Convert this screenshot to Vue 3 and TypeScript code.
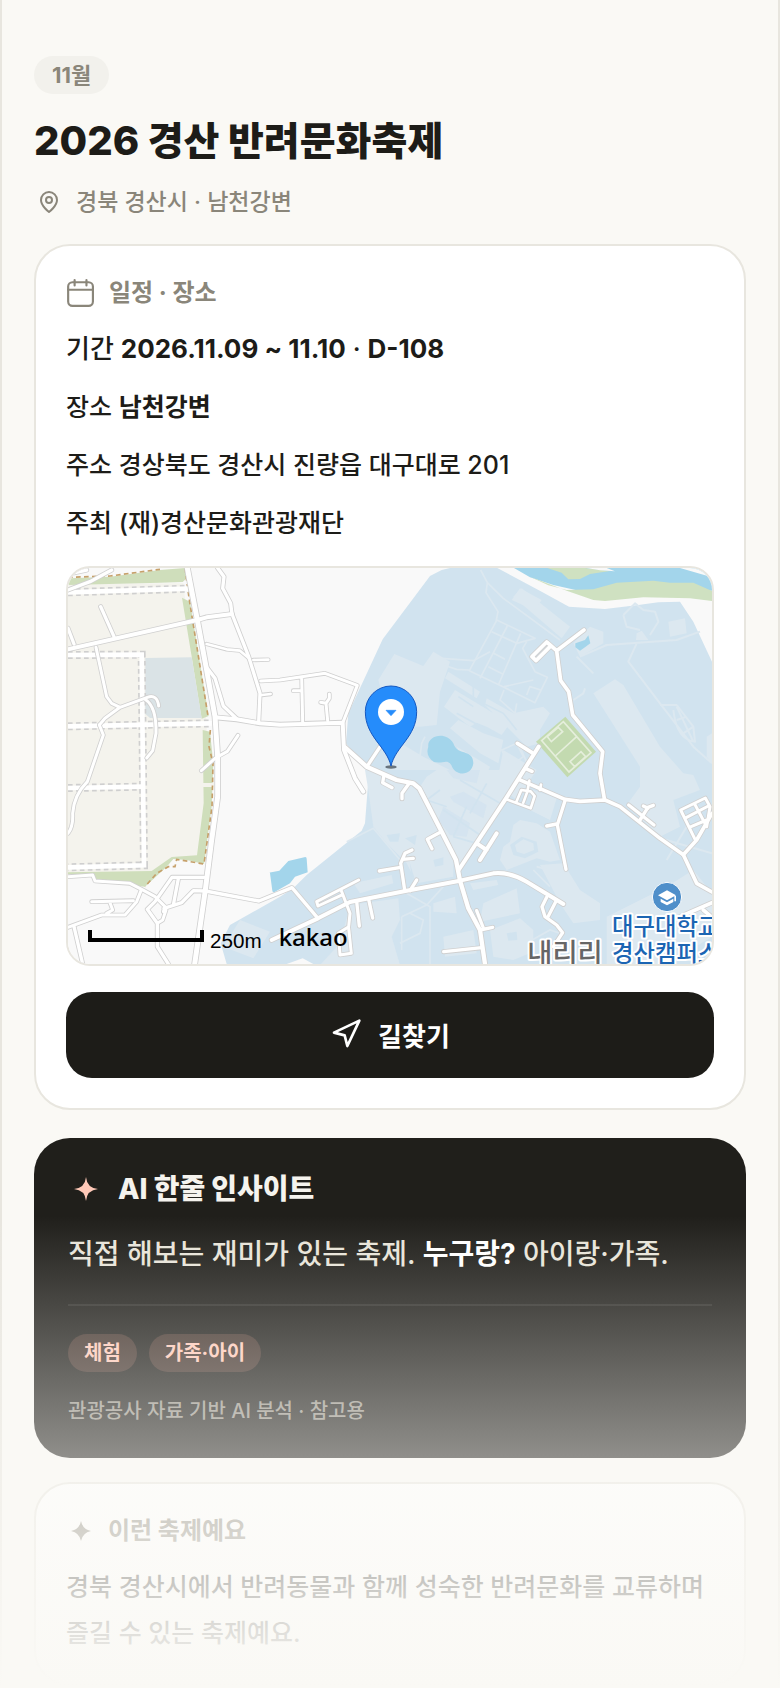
<script setup lang="ts">
interface Row {
  label: string
  value: string
  strong?: boolean
  extra?: string
}

interface Road {
  d: string
  w: number
}

const rows: Row[] = [
  { label: '기간', value: '2026.11.09 ~ 11.10', strong: true, extra: 'D-108' },
  { label: '장소', value: '남천강변', strong: true },
  { label: '주소', value: '경상북도 경산시 진량읍 대구대로 201' },
  { label: '주최', value: '(재)경산문화관광재단' },
]

const tags: string[] = ['체험', '가족·아이']

const roads: Road[] = [
  { d: 'M24 268 L412 180 L440 172 L516 162', w: 12 },
  { d: 'M382 24 L412 180 L438 320 L465 470 L473 590 L473 710 L455 840 L436 990 L404 1212', w: 15 },
  { d: 'M473 24 L492 50 L488 85 L512 130 L516 162 L566 290 L600 400 L596 486', w: 10 },
  { d: 'M465 472 L530 478 L600 490 L660 494 L848 488 L850 530 L852 570 L885 655 L910 695', w: 12 },
  { d: 'M440 252 L500 268 L540 272 L566 294 M580 300 L625 299 M606 405 L632 402', w: 8 },
  { d: 'M440 322 L465 355 L490 438 L530 476', w: 10 },
  { d: 'M602 363 L660 360 L795 340 L892 376 L850 484 M725 352 L728 486 M725 392 L700 392', w: 9 },
  { d: 'M803 482 L798 430 L782 427 M798 430 L808 415 L808 402', w: 9 },
  { d: 'M424 632 L465 595 L502 574 L534 526', w: 9 },
  { d: 'M122 140 L162 230 M24 205 L42 252 M24 90 L90 65 L155 30 M24 42 L80 30', w: 10 },
  { d: 'M108 262 L140 410 L155 430 L180 442 M118 495 L135 475 L180 442 L262 412 Q292 402 296 438', w: 9 },
  { d: 'M118 495 L130 525 L82 665 Q42 705 38 760 Q40 800 24 820', w: 9 },
  { d: 'M255 418 Q290 440 288 520 L278 572 L260 594', w: 9 },
  { d: 'M24 950 L98 945 L105 963 L210 970 L245 988 L285 1010 L315 1040 L310 1055', w: 9 },
  { d: 'M24 1102 L125 1065 L195 1065 L230 1025 L243 992 M95 1025 L220 1022 M150 1028 L158 1050 L140 1060', w: 9 },
  { d: 'M42 1100 L68 1212 M292 1090 L292 1160 L325 1212 M292 1090 L262 1048 L285 1025 L336 952 L432 952', w: 10 },
  { d: 'M355 956 L340 1035 M312 1045 L365 1028 L400 992 L436 993 L597 1023 L696 983 L774 1075', w: 10 },
  { d: 'M292 1090 L308 1080 L318 1050', w: 9 },
  { d: 'M635 1140 L774 1075 L870 1026 L1040 992 L1200 962 L1300 940 Q1350 935 1400 965 L1510 1032', w: 12 },
  { d: 'M855 562 L920 620 L1010 660 L1060 670 L1078 685 L1145 815 L1188 900 L1200 962 L1225 1045 L1260 1110 L1275 1212', w: 13 },
  { d: 'M922 618 L965 553 M972 645 L968 668 L996 683 M1046 672 L1026 700 L1026 716 M1142 816 L1102 838 L1116 866', w: 10 },
  { d: 'M1196 930 L1338 715 L1436 560 M1250 850 L1280 870 M1260 900 L1310 820', w: 12 },
  { d: 'M1372 550 L1416 578 M1396 625 L1416 634 M1376 658 L1515 718 L1560 724 L1635 720 L1680 740 L1800 835 L1870 884 L1910 840 L1956 760', w: 11 },
  { d: 'M1340 718 L1412 745 L1424 708 L1412 694 L1384 690 L1368 728 M1408 662 L1402 695 L1390 728 M1440 690 L1443 674', w: 8 },
  { d: 'M1515 722 L1492 795 L1518 928 M1460 798 L1490 792', w: 10 },
  { d: 'M1572 210 L1490 272 L1460 246 L1416 290 L1428 302 L1470 260 M1490 272 L1502 362 L1526 395 L1538 465 L1628 575 L1620 640 L1633 716', w: 11 },
  { d: 'M1706 735 L1782 795 M1740 780 L1764 742 L1780 736 M1750 738 L1764 745', w: 10 },
  { d: 'M1904 836 L1862 750 L1936 714 L1950 740 L1940 800 M1874 775 L1945 738 M1888 802 L1940 780 M1904 732 L1940 800', w: 9 },
  { d: 'M1870 884 L1910 970 L1956 996 M1860 1070 L1956 1028 M1930 1050 L1956 1072', w: 11 },
  { d: 'M1460 1012 L1446 1040 L1455 1070 L1490 1095 L1508 1118 L1480 1160 M1488 1024 L1464 1070', w: 10 },
  { d: 'M1151 1175 L1265 1163 M1260 1110 L1298 1102 M1250 1052 L1270 1104', w: 10 },
  { d: 'M896 960 L770 1025 L774 1038 L848 1004 M844 992 L870 1060 L866 1100 L835 1120 L840 1185 L874 1180 L866 1104', w: 9 },
  { d: 'M890 1024 L898 1098 M926 1018 L938 1074 M1034 990 L1022 910 L1035 880 L1056 870 M958 933 L1022 922 M1028 898 L1060 895 M1050 992 L1070 960', w: 10 },
]

const plannedRoads: string[] = [
  'M24 97 L385 86',
  'M24 285 L245 284 L252 916 L24 922',
  'M24 499 L455 490',
  'M24 684 L248 680',
]
</script>

<template>
  <main class="page">
    <header class="head">
      <span class="chip month">11월</span>
      <h1 class="title"><span class="year">2026</span> 경산 반려문화축제</h1>
      <p class="region">
        <svg class="pin-icon" viewBox="0 0 24 24" aria-hidden="true">
          <path d="M20 10c0 6-8 12-8 12s-8-6-8-12a8 8 0 0 1 16 0Z" />
          <circle cx="12" cy="10" r="3" />
        </svg>
        <span>경북 경산시 · 남천강변</span>
      </p>
    </header>

    <section class="card place">
      <h2 class="card-title">
        <svg class="cal-icon" viewBox="0 0 26 26" aria-hidden="true">
          <rect x="2" y="3" width="23" height="22" rx="4" />
          <path d="M2 10h23M8 1v5M19 1v5" />
        </svg>
        <span>일정 · 장소</span>
      </h2>
      <ul class="rows">
        <li v-for="row in rows" :key="row.label" :class="{ date: row.extra }">
          {{ row.label }}
          <strong v-if="row.strong">{{ row.value }}</strong>
          <template v-else>{{ row.value }}</template>
          <template v-if="row.extra"> · <strong>{{ row.extra }}</strong></template>
        </li>
      </ul>

      <div class="map">
        <svg viewBox="24 24 1932 1188" preserveAspectRatio="xMidYMid slice" role="img" aria-label="남천강변 지도">
          <rect x="24" y="24" width="1932" height="1188" fill="#f9f9f9" />
          <path fill="#f4f3ed" d="M24 70H370L395 290L440 480V890L335 892L275 937L24 942Z" />
          <path fill="#cfdebb" d="M24 75L30 55L150 50L300 30L375 24L380 55L368 66L300 68Z" />
          <path fill="#cfdebb" d="M366 113L390 125L446 468L425 476L395 290Z" />
          <path fill="#cfdebb" d="M428 510L450 515L460 610L455 740L432 912L380 900L340 897L320 920L255 980L105 965L98 942H24V937L275 933L335 891L411 886L431 730Z" />
          <path fill="#dae3e6" d="M256 294L395 292L425 474H270L256 462Z" />
          <path stroke="#f4f3ed" stroke-width="12" d="M428 675H462" />
          <path fill="#d1e3ef" d="M1170 24L1145 30L1110 48L968 238L865 460L858 550L918 630L925 660L915 790L905 812L740 945L700 985L660 1010L510 1095L482 1150L500 1212H1956V305L1900 185L1860 125L1795 127L1735 135L1635 147L1527 140L1445 95L1312 24Z" />
          <path fill="#f9f9f9" d="M680 1212L728 1195L760 1212Z" />

          <g fill="#dce8f0">
            <path d="M1360 110L1385 85L1530 200L1505 235Z" />
            <path d="M1600 400L1665 358L1690 375L1800 560L1870 640L1900 645L1920 690L1840 720L1860 800L1800 830L1700 735L1740 680L1740 620Z" />
            <path d="M1540 250L1590 200L1630 215V250L1560 290Z" />
            <path d="M1640 1070L1820 980L1900 930L1956 1000V1130L1820 1212H1640Z" />
            <path d="M540 1080L630 1115L580 1195L490 1160Z" />
            <path d="M1825 185L1875 175L1880 220L1830 230Z" />
            <path d="M1440 915L1510 910L1560 990L1620 1030V1080L1540 1090L1500 1030Z" />
          </g>

          <g transform="translate(930 30)" fill="#dce8f0">
            <path d="M73 252L160 288L190 245L240 275L225 320L210 365L200 465L150 470L60 470L25 330Z" />
            <path d="M235 305L330 365L320 385L225 325ZM255 360L420 460L395 495L350 470L320 458L300 470L222 410ZM350 385L430 430L520 410L540 430L510 480V520L470 530L345 405Z" />
            <path d="M265 450L340 490L400 510L385 580L330 550L240 475ZM425 90L450 55L515 90L495 118L470 110Z" />
            <path d="M60 500L160 560L240 600H60ZM260 530L360 590L340 640L300 620Z" />
            <path d="M400 540L500 600L440 690L380 640Z" />
            <g fill="none" stroke="#dce8f0" stroke-width="5" stroke-linejoin="round">
              <path d="M332 0L352 38L348 68L384 125L378 155L298 302L402 352L495 398L532 322L495 305L458 235L470 215M352 38L400 85L570 210M380 150L495 205L440 220L365 185M412 168L330 325M452 190L385 345M368 248L405 268M355 290L398 312M402 350L490 330M402 360L390 390L435 430L440 400M470 375L480 350L512 360" />
              <path d="M215 265L310 272L360 245M220 285L260 298L298 300" />
              <path d="M395 540L440 520L460 560L420 590ZM450 530L480 600M150 560L155 520L165 500" />
            </g>
            <path fill="none" stroke="#d1e3ef" stroke-width="5" d="M270 365L400 430L440 480M310 345V385L345 400M260 430L370 490M265 380L310 410" />
          </g>

          <g transform="translate(780 630)">
            <g fill="#dce8f0">
              <path d="M135 0L160 0L300 60L370 190L400 260V320L290 340L260 280L200 220L160 170L145 60Z" />
              <path d="M320 20L350 0H580L560 80L410 300L370 180L300 50Z" />
              <path d="M580 165L600 150L650 160L690 185L720 270L690 275L650 265L560 300L540 270L550 230L570 215Z" />
              <path d="M640 60L710 85L690 150L630 120Z" />
              <path d="M490 400L590 355L600 430L480 455ZM450 340L530 330L535 345L460 360Z" />
              <path d="M90 405L235 385L240 450L215 500L240 585H0L60 520ZM340 400L405 380L410 430L340 425ZM370 500L460 480L470 550L375 560Z" />
              <path d="M510 480L600 445L640 480V545L580 570L520 560Z" />
              <path d="M100 340L215 315L220 340L120 370Z" />
            </g>
            <g fill="#d1e3ef">
              <path d="M355 150L370 110L450 160L440 200L390 195ZM390 80L430 65L500 105L490 145L400 95ZM380 0H480L470 40L400 25Z" opacity=".7" />
              <path d="M570 225L605 200L650 215L655 245L615 265L580 255Z" />
              <path d="M200 195L240 190L235 215L210 215ZM340 270L370 262V285L345 290ZM270 280L285 330L275 330ZM255 205L290 195L285 225Z" />
              <path d="M560 490L590 485L592 510L565 512Z" />
            </g>
            <path fill="#dce8f0" d="M585 225L610 208L640 220L642 240L612 252L590 245Z" />
            <g fill="none" stroke="#dce8f0" stroke-width="5">
              <path d="M80 215L160 175L240 270M260 370L330 410V585M245 440L320 405L370 350M245 440V540M240 520L300 490L310 450L270 430M640 300L690 350M720 310L650 290M600 530L690 480L720 490" />
              <path stroke="#d1e3ef" d="M370 120L480 195M420 30L540 100M360 60L320 90L380 110M400 200L470 220M440 110L400 200M500 40L450 130" />
            </g>
          </g>

          <g fill="none" stroke="#dce8f0" stroke-width="6" stroke-linejoin="round">
            <path d="M1560 290L1640 255L1850 240L1920 215M1730 250L1705 305L1800 430L1900 560L1956 610M1800 435L1850 435L1900 500L1905 545Q1850 540 1840 450M1850 440L1900 545M1850 480L1880 470M1870 520L1900 500M1550 290L1600 340" />
            <path d="M1690 165L1725 130L1750 150L1785 155L1795 185L1770 225M1690 165L1700 200L1740 210" />
            <path d="M1800 835L1956 880M1820 900L1880 800M1540 420L1570 400L1575 385" />
          </g>
          <path fill="#dce8f0" d="M1730 220L1745 212L1765 240H1728ZM1940 530L1956 520V610L1940 590Z" />

          <path fill="#a3d5eb" d="M1362 24L1410 52L1480 75L1590 100L1700 90L1956 92V24Z" />
          <path fill="#cfe1c1" d="M1410 50L1465 76L1520 90L1600 88L1670 68L1780 62L1830 68L1900 68L1956 93V123L1890 115L1750 112L1635 123L1600 120L1520 92Z" />
          <path fill="#cfe1c1" d="M1462 24H1575L1650 33L1590 42L1560 57L1525 58L1505 38Z" />
          <path fill="#f9f9f9" d="M1580 24H1640L1665 34L1620 31ZM1860 24L1956 52V24Z" />
          <path fill="#a3d5eb" d="M1105 560C1100 530 1155 510 1180 550C1192 590 1240 565 1240 610C1235 650 1185 650 1174 615C1160 595 1150 612 1122 606C1105 595 1098 580 1105 560Z" />
          <path fill="#a3d5eb" d="M630 940Q627 937 634 937L658 932L685 903L736 891Q740 891 740 896L743 937L705 950L690 970L644 996Q638 998 637 992Z" />
          <path fill="#a3d5eb" d="M1546 250L1575 240L1585 226L1591 250L1575 262L1560 272L1546 262Z" />
          <path fill="#c3dab0" d="M1516 470L1608 575L1522 652L1428 545Z" />
          <path fill="none" stroke="#e5eedb" stroke-width="5" d="M1510 485L1593 578L1527 636L1445 542ZM1550 530L1486 588M1462 530L1495 502L1508 515L1474 545ZM1530 605L1563 575L1577 590L1544 620Z" />

          <g fill="none" stroke="#c6a06a" stroke-width="5" stroke-dasharray="14 10">
            <path d="M24 52L150 48L300 28M375 24L388 120L444 468M451 510L447 560L459 610L456 740L432 912L350 898L345 920L325 920L290 940L255 980" />
          </g>
          <g fill="none">
            <path v-for="d in plannedRoads" :key="d" :d="d" stroke="#cfcfcf" stroke-width="24" stroke-dasharray="14 10" />
            <path v-for="d in plannedRoads" :key="d + 'c'" :d="d" stroke="#ffffff" stroke-width="14" />
          </g>
          <g fill="none" stroke="#d0d0d0" stroke-linecap="round" stroke-linejoin="round">
            <path v-for="road in roads" :key="road.d" :d="road.d" :stroke-width="road.w + 5" />
          </g>
          <g fill="none" stroke="#ffffff" stroke-linecap="round" stroke-linejoin="round">
            <path v-for="road in roads" :key="road.d" :d="road.d" :stroke-width="road.w" />
          </g>

          <ellipse cx="993" cy="621" rx="17" ry="5" fill="#4c5660" opacity=".8" />
          <path d="M993 618C980 560 916 530 916 455A77 77 0 0 1 1070 455C1070 530 1006 560 993 618Z" fill="#258cfb" stroke="#1558c0" stroke-width="3" />
          <circle cx="993" cy="456" r="39" fill="#fff" />
          <path d="M978 451H1008L993 467Z" fill="#258cfb" stroke="#258cfb" stroke-width="2" />

          <circle cx="1821" cy="1011" r="44" fill="#4f8fca" stroke="#fff" stroke-width="3" />
          <path fill="#fff" d="M1794 1006L1821 991L1848 1006L1821 1021ZM1802 1016L1821 1027L1840 1016V1026L1821 1036L1802 1026ZM1843 1008H1848V1024H1843Z" />
          <g class="map-name" paint-order="stroke" stroke="#fff" stroke-width="12" stroke-linejoin="round">
            <text x="1656" y="1126" fill="#1b65b3">대구대학교</text>
            <text x="1656" y="1206" fill="#1b65b3">경산캠퍼스</text>
            <text class="village" x="1402" y="1208" fill="#666">내리리</text>
          </g>
          <path fill="none" stroke="#000" stroke-width="12" d="M90 1110V1140H426V1110" />
          <text class="scale" x="450" y="1164">250m</text>
          <text class="brand" x="656" y="1157">kakao</text>
        </svg>
      </div>

      <button type="button" class="route">
        <svg viewBox="0 0 24 24" aria-hidden="true"><path d="M3 11L22 2L13 21L11 13Z" /></svg>
        <span>길찾기</span>
      </button>
    </section>

    <section class="insight">
      <h2 class="insight-title">
        <svg viewBox="0 0 24 24" aria-hidden="true"><path d="M12 0Q13 11 24 12Q13 13 12 24Q11 13 0 12Q11 11 12 0Z" /></svg>
        <span>AI 한줄 인사이트</span>
      </h2>
      <p class="insight-text">직접 해보는 재미가 있는 축제. <strong>누구랑?</strong> 아이랑·가족.</p>
      <div class="tags">
        <span v-for="tag in tags" :key="tag" class="chip tag">{{ tag }}</span>
      </div>
      <p class="note">관광공사 자료 기반 AI 분석 · 참고용</p>
    </section>

    <section class="card about">
      <h2 class="card-title">
        <svg class="star-icon" viewBox="0 0 24 24" aria-hidden="true"><path d="M12 0Q14 10 24 12Q14 14 12 24Q10 14 0 12Q10 10 12 0Z" /></svg>
        <span>이런 축제예요</span>
      </h2>
      <p class="about-text">경북 경산시에서 반려동물과 함께 성숙한 반려문화를 교류하며 즐길 수 있는 축제예요.</p>
    </section>

    <div class="fade" aria-hidden="true"></div>
  </main>
</template>

<style>
body {
  margin: 0;
  background: #faf9f5;
}
</style>

<style scoped>
.page {
  position: relative;
  box-sizing: border-box;
  min-height: 100vh;
  padding: 56px 32px 0;
  border: solid #e8e6df;
  border-width: 0 2px;
  background: #faf9f5;
  color: #1d1c18;
  font-family: Inter, "Noto Sans CJK KR", sans-serif;
  font-size: 25px;
  font-weight: 500;
  word-break: keep-all;
}

h1,
h2,
p,
ul {
  margin: 0;
  padding: 0;
}

svg {
  display: block;
  flex: none;
}

.head {
  display: flex;
  flex-direction: column;
  align-items: flex-start;
}

.chip {
  height: 38px;
  border-radius: 19px;
  font-size: 20px;
  line-height: 38px;
  font-weight: 700;
}

.month {
  padding: 0 18px;
  background: #f2f1ec;
  color: #8a867a;
  font-size: 22px;
}

.title {
  margin-top: 19px;
  font-size: 39px;
  line-height: 56px;
  font-weight: 800;
}

.year {
  font-size: 40px;
}

.region {
  display: flex;
  align-items: center;
  gap: 15px;
  margin-top: 15px;
  margin-bottom: 24px;
  padding-left: 3px;
  font-size: 23px;
  line-height: 36px;
  color: #8a867a;
}

.pin-icon {
  width: 24px;
  height: 24px;
}

.pin-icon,
.cal-icon {
  fill: none;
  stroke: #8a867a;
  stroke-width: 2;
  stroke-linecap: round;
  stroke-linejoin: round;
}

.card {
  padding: 30px;
  border: 2px solid #e8e6df;
  border-radius: 36px;
  background: #fff;
}

.card-title {
  display: flex;
  align-items: center;
  gap: 15px;
  font-size: 24px;
  line-height: 34px;
  font-weight: 700;
  color: #8a867a;
}

.cal-icon {
  width: 28px;
  height: 28px;
}

.star-icon {
  width: 20px;
  height: 20px;
  margin-right: 2px;
  margin-left: 5px;
  fill: #8a867a;
}

.rows {
  display: grid;
  gap: 12px;
  margin-top: 16px;
  list-style: none;
  line-height: 46px;
}

.rows strong {
  font-weight: 700;
}

.date {
  font-size: 26px;
}

.map {
  margin-top: 20px;
  overflow: hidden;
  border: 2px solid #e8e6df;
  border-radius: 24px;
}

.map svg {
  width: 100%;
  height: 396px;
}

.map-name {
  font-size: 70px;
  font-weight: 500;
}

.village {
  font-size: 82px;
}

.scale {
  font-family: "Liberation Sans", sans-serif;
  font-size: 62px;
}

.brand {
  font-family: "Noto Sans", sans-serif;
  font-size: 72px;
}

.route {
  display: flex;
  align-items: center;
  justify-content: center;
  gap: 16px;
  width: 100%;
  height: 86px;
  margin-top: 26px;
  padding: 0 0 2px;
  border: 0;
  border-radius: 26px;
  background: #1d1c18;
  color: #fff;
  font: inherit;
  font-size: 26px;
  font-weight: 700;
}

.route svg {
  width: 32px;
  height: 32px;
  fill: none;
  stroke: #fff;
  stroke-width: 2;
  stroke-linejoin: round;
}

.insight {
  margin-top: 28px;
  padding: 30px 34px;
  border-radius: 36px;
  background: #201f1b;
}

.insight-title {
  display: flex;
  align-items: center;
  gap: 20px;
  padding-left: 6px;
  font-size: 28px;
  line-height: 42px;
  font-weight: 800;
  color: #f5f3ee;
}

.insight-title svg {
  width: 24px;
  height: 24px;
  fill: #ffc9b8;
}

.insight-text {
  margin-top: 20px;
  padding-bottom: 26px;
  border-bottom: 2px solid rgba(255, 255, 255, 0.08);
  font-size: 28px;
  line-height: 48px;
  color: #e8e4d9;
}

.insight-text strong {
  font-weight: 700;
  color: #fff;
}

.tags {
  display: flex;
  gap: 12px;
  margin-top: 28px;
}

.tag {
  padding: 0 16px;
  background: rgba(255, 160, 140, 0.16);
  color: #ffc9b8;
}

.note {
  margin-top: 22px;
  font-size: 20px;
  line-height: 34px;
  color: #98948a;
}

.about {
  margin-top: 24px;
  padding-bottom: 28px;
}

.about-text {
  margin-top: 16px;
  font-size: 25px;
  line-height: 46px;
}

.fade {
  position: absolute;
  right: -2px;
  bottom: 0;
  left: -2px;
  height: 472px;
  background: linear-gradient(rgba(250, 249, 245, 0), #faf9f5);
  pointer-events: none;
}
</style>
